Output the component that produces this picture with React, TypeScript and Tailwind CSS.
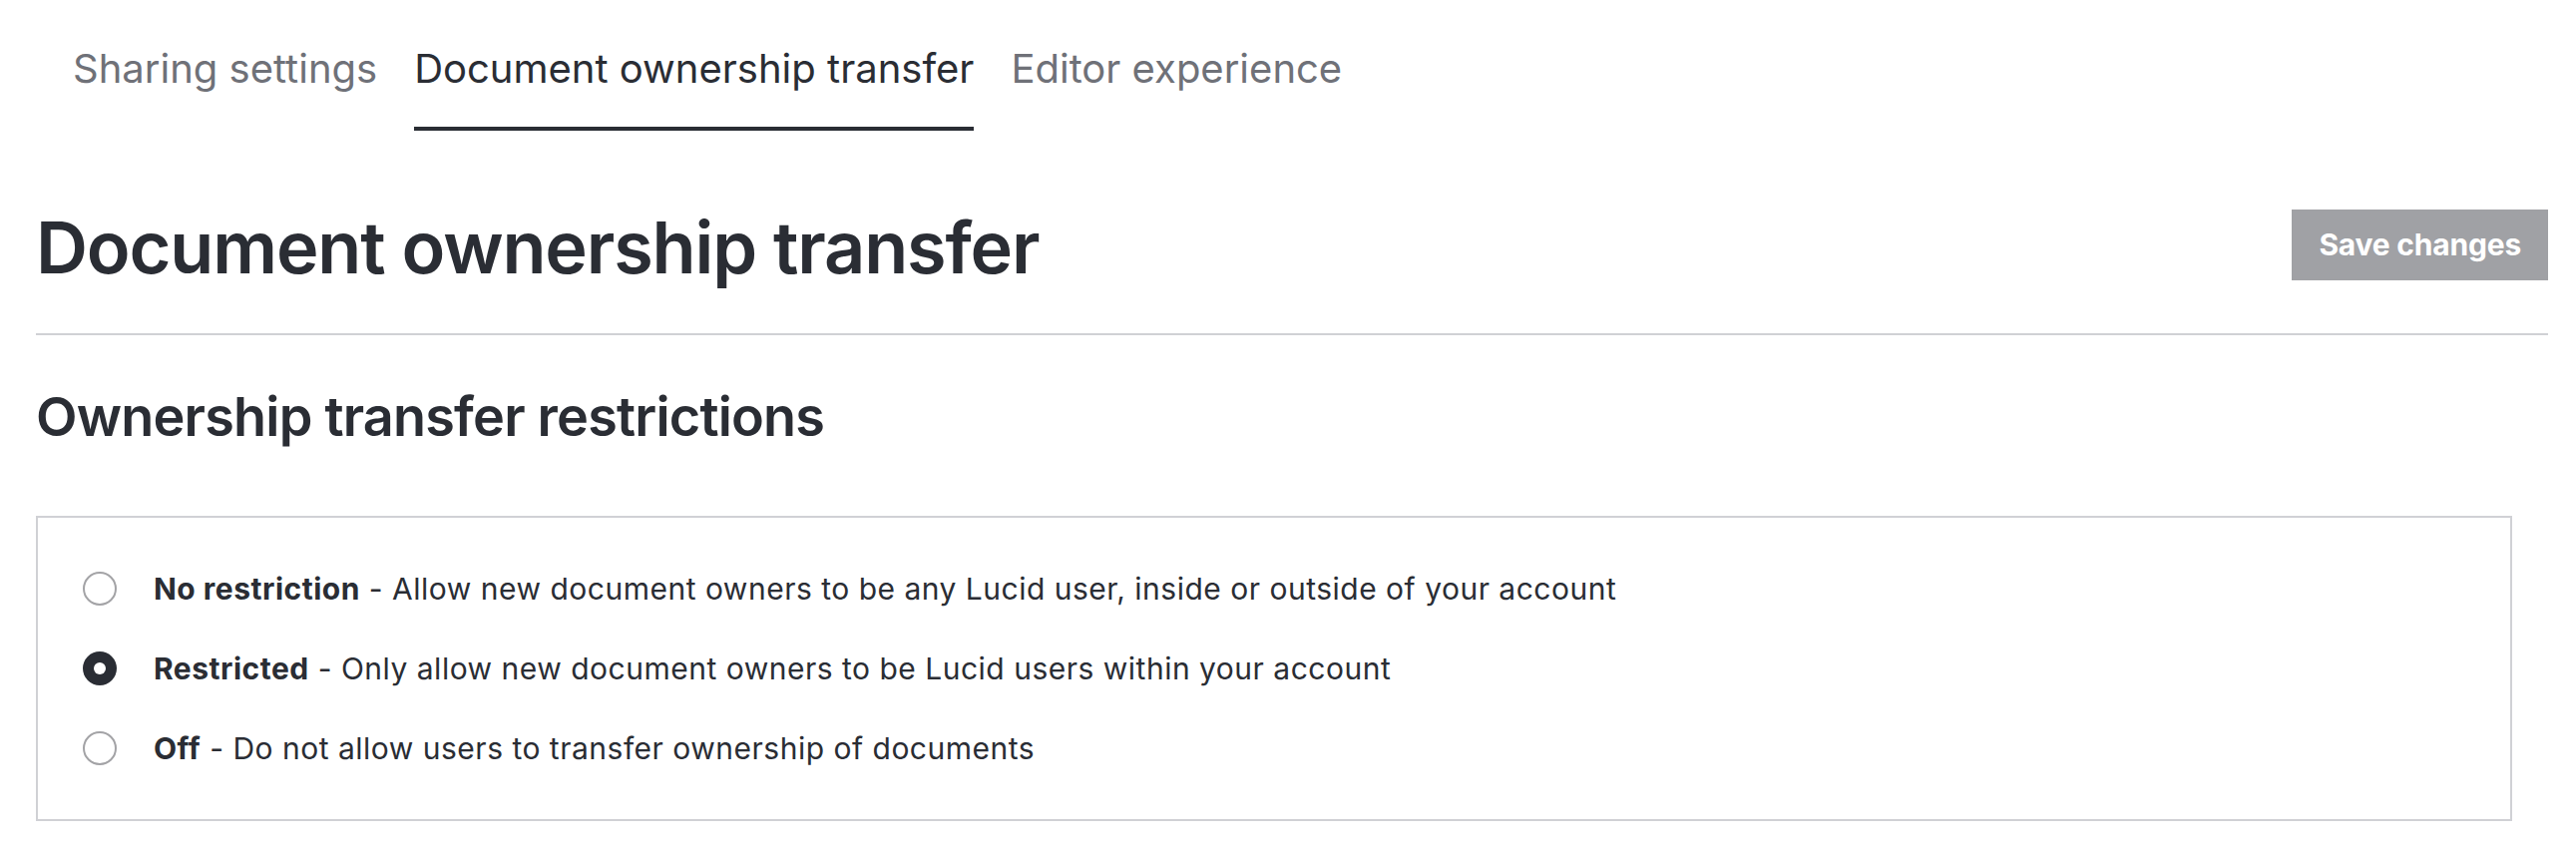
import React, { useState } from 'react';

const tabs = ['Sharing settings', 'Document ownership transfer', 'Editor experience'];

const options = [
  {
    id: 'none',
    label: 'No restriction',
    text: 'Allow new document owners to be any Lucid user, inside or outside of your account',
  },
  {
    id: 'restricted',
    label: 'Restricted',
    text: 'Only allow new document owners to be Lucid users within your account',
  },
  {
    id: 'off',
    label: 'Off',
    text: 'Do not allow users to transfer ownership of documents',
  },
];

function Radio({ checked }: { checked: boolean }) {
  if (checked) {
    return (
      <span className="flex h-[34px] w-[34px] shrink-0 items-center justify-center rounded-full bg-[#2a2d34]">
        <span className="h-[12px] w-[12px] rounded-full bg-white" />
      </span>
    );
  }
  return <span className="h-[34px] w-[34px] shrink-0 rounded-full border-2 border-[#a3a3a6] bg-white" />;
}

export default function App() {
  const [activeTab, setActiveTab] = useState(1);
  const [selected, setSelected] = useState('restricted');

  return (
    <div className="min-h-screen bg-white pl-[36px] pr-[28px] font-['Inter',sans-serif] text-[#2a2d34]">
      <nav className="flex gap-[37px] pl-[37px] pt-[45px]">
        {tabs.map((tab, i) => (
          <button
            key={tab}
            onClick={() => setActiveTab(i)}
            className={
              i === activeTab
                ? 'border-b-4 border-[#2a2d34] pb-[34px] text-[40px] leading-[48px] text-[#2a2d34]'
                : 'border-b-4 border-transparent pb-[34px] text-[40px] leading-[48px] text-[#6f7178]'
            }
          >
            {tab}
          </button>
        ))}
      </nav>

      <div className="flex items-start justify-between border-b-2 border-[#d0d1d5] pt-[74px] pb-[43px]">
        <h1 className="text-[72px] font-semibold leading-[86px] tracking-[-1.15px]">Document ownership transfer</h1>
        <button className="mt-[5px] h-[71px] bg-[#a0a1a5] px-[27px] text-[30px] font-bold tracking-[-0.2px] text-white">
          Save changes
        </button>
      </div>

      <h2 className="mt-[48px] pt-[1px] text-[54px] font-semibold leading-[66px] tracking-[-0.8px]">
        Ownership transfer restrictions
      </h2>

      <div className="mt-[66px] mr-[36px] border-2 border-[#d0d1d5] py-[31px] pl-[45px]">
        {options.map((opt) => (
          <label
            key={opt.id}
            onClick={() => setSelected(opt.id)}
            className="flex h-[80px] cursor-pointer items-center gap-[37px] text-[30px] tracking-[0.5px]"
          >
            <Radio checked={selected === opt.id} />
            <span>
              <span className="font-bold">{opt.label}</span> - {opt.text}
            </span>
          </label>
        ))}
      </div>
    </div>
  );
}
